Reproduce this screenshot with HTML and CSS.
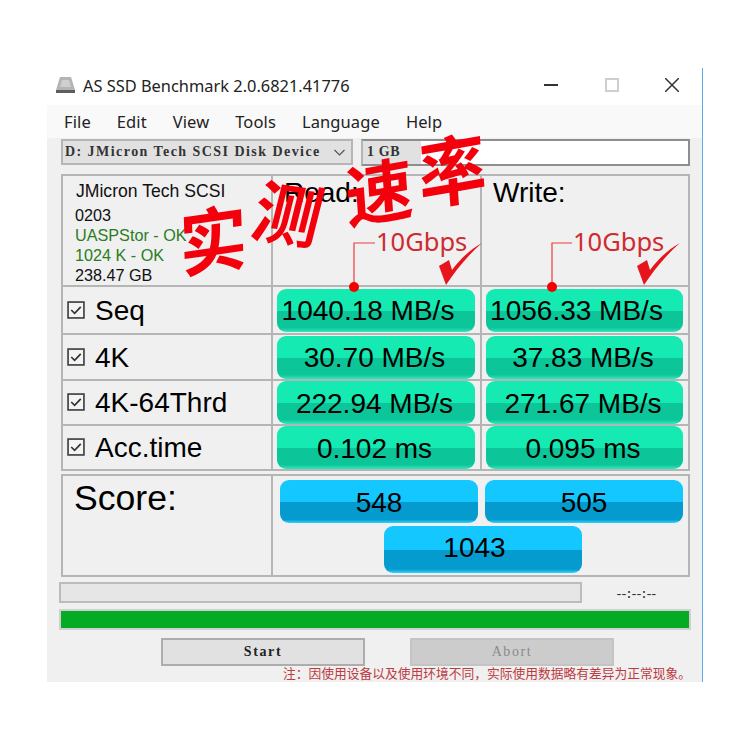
FILE: index.html
```html
<!DOCTYPE html>
<html lang="en">
<head>
<meta charset="utf-8">
<title>AS SSD Benchmark</title>
<link rel="stylesheet" href="styles.css">
</head>
<body>
<main class="window">
  <header class="titlebar">
    <svg class="app-icon" viewBox="0 0 21 18"><path d="M5 1h11l4 13H1z" fill="#b4b4b4"/><path d="M1 14h19v3H1z" fill="#5e5e5e"/><path d="M7 4h7l2 7H5z" fill="#cfcfcf"/></svg>
    <span class="title">AS SSD Benchmark 2.0.6821.41776</span>
    <div class="controls">
      <svg class="ctl" viewBox="0 0 14 14"><path d="M0 7h14" stroke="#333" stroke-width="2" fill="none"/></svg>
      <svg class="ctl" viewBox="0 0 14 14"><rect x="1" y="1" width="12" height="12" stroke="#cfcfcf" stroke-width="2" fill="none"/></svg>
      <svg class="ctl" viewBox="0 0 14 14"><path d="M0 0l14 14M14 0L0 14" stroke="#333" stroke-width="1.5" fill="none"/></svg>
    </div>
  </header>
  <nav class="menu">
    <span>File</span><span>Edit</span><span>View</span><span>Tools</span><span>Language</span><span>Help</span>
  </nav>
  <div class="content">
    <div class="device-row">
      <div class="combo">
        <span>D: JMicron Tech SCSI Disk Device</span>
        <svg class="chev" viewBox="0 0 12 7"><path d="M1 1l5 5 5-5" stroke="#555" stroke-width="1.2" fill="none"/></svg>
      </div>
      <div class="size-wrap">
        <span class="size">1 GB</span>
        <div class="field"></div>
      </div>
    </div>

    <section class="grid">
      <div class="cell info">
        <div class="info-name">JMicron Tech SCSI</div>
        <div>0203</div>
        <div class="ok">UASPStor - OK</div>
        <div class="ok">1024 K - OK</div>
        <div>238.47 GB</div>
      </div>
      <div class="cell head">Read:</div>
      <div class="cell head">Write:</div>

      <label class="cell row-label"><svg class="check" viewBox="0 0 17 17"><rect x="1" y="1" width="15" height="15" fill="#f4f4f4" stroke="#444" stroke-width="1.6"/><path d="M4 8.5l3.200 3.200L13 5.500" stroke="#333" stroke-width="1.600" fill="none"/></svg>Seq</label>
      <div class="cell"><div class="pill green seq">1040.18 MB/s</div></div>
      <div class="cell"><div class="pill green seq">1056.33 MB/s</div></div>

      <label class="cell row-label"><svg class="check" viewBox="0 0 17 17"><rect x="1" y="1" width="15" height="15" fill="#f4f4f4" stroke="#444" stroke-width="1.6"/><path d="M4 8.5l3.200 3.200L13 5.500" stroke="#333" stroke-width="1.600" fill="none"/></svg>4K</label>
      <div class="cell"><div class="pill green">30.70 MB/s</div></div>
      <div class="cell"><div class="pill green">37.83 MB/s</div></div>

      <label class="cell row-label"><svg class="check" viewBox="0 0 17 17"><rect x="1" y="1" width="15" height="15" fill="#f4f4f4" stroke="#444" stroke-width="1.6"/><path d="M4 8.5l3.200 3.200L13 5.500" stroke="#333" stroke-width="1.600" fill="none"/></svg>4K-64Thrd</label>
      <div class="cell"><div class="pill green">222.94 MB/s</div></div>
      <div class="cell"><div class="pill green">271.67 MB/s</div></div>

      <label class="cell row-label"><svg class="check" viewBox="0 0 17 17"><rect x="1" y="1" width="15" height="15" fill="#f4f4f4" stroke="#444" stroke-width="1.6"/><path d="M4 8.5l3.200 3.200L13 5.500" stroke="#333" stroke-width="1.600" fill="none"/></svg>Acc.time</label>
      <div class="cell"><div class="pill green">0.102 ms</div></div>
      <div class="cell"><div class="pill green">0.095 ms</div></div>
    </section>

    <section class="score">
      <div class="score-label">Score:</div>
      <div class="score-values">
        <div class="pill blue">548</div>
        <div class="pill blue">505</div>
        <div class="pill blue total">1043</div>
      </div>
    </section>

    <div class="progress-row">
      <div class="progress"></div>
      <span class="time">--:--:--</span>
    </div>
    <div class="bar"></div>
    <div class="actions">
      <button class="btn">Start</button>
      <button class="btn disabled">Abort</button>
    </div>
  </div>

  <p class="note">注：因使用设备以及使用环境不同，实际使用数据略有差异为正常现象。</p>

  <svg class="marks" viewBox="47 68 655 614">
    <path d="M375 243h-21v44M572 243h-20v44" fill="none" stroke="#ee3b3b" stroke-width="1.200"/>
    <circle cx="354" cy="287" r="5" fill="#f40000"/>
    <circle cx="552" cy="287" r="5" fill="#f40000"/>
    <path d="M439 266l10-6 3 10C461 258 471 249 482 243 468 255 456 270 446 285z" fill="#e8141c"/>
    <path d="M637 266l10-6 3 10C659 258 669 249 680 243 666 255 654 270 644 285z" fill="#e8141c"/>
  </svg>
  <span class="speed speed-read">10Gbps</span>
  <span class="speed speed-write">10Gbps</span>
  <span class="stamp s1">实</span>
  <span class="stamp s2">测</span>
  <span class="stamp s3">速</span>
  <span class="stamp s4">率</span>
</main>
</body>
</html>
```

FILE: styles.css
```css
* { box-sizing: border-box; }
html, body { margin: 0; background: #fff; }
body { padding: 68px 0 0 47px; width: 750px; height: 750px; overflow: hidden; font-family: "Liberation Sans", Arial, sans-serif; color: #000; }

.window { position: relative; width: 656px; height: 614px; background: #f0f0f0; border-right: 1px solid #5aa9ec; }

.titlebar { height: 37px; background: #fff; display: flex; align-items: center; padding-left: 8px; }
.app-icon { width: 21px; height: 18px; margin-right: 7px; margin-top: -3px; }
.title { font-family: "Noto Sans", sans-serif; font-size: 16.4px; color: #222; margin-top: -3px; }
.controls { margin-left: auto; display: flex; gap: 46.5px; padding-right: 23px; }
.ctl { width: 14px; height: 14px; margin-top: -3px; }

.menu { height: 33px; background: #f9f9f9; display: flex; gap: 26px; padding-left: 17px; align-items: center; font-family: "Noto Sans", sans-serif; font-size: 16.5px; letter-spacing: 0.1px; color: #222; }

.content { padding: 1px 12px 0 14px; position: relative; }

.device-row { display: flex; gap: 8px; height: 27px; }
.combo { width: 292px; height: 26px; background: #e1e1e1; border: 2px solid #b5b5b5; display: flex; align-items: center; justify-content: space-between; padding: 0 5px 0 2px; font-family: "Liberation Serif", serif; font-weight: 700; font-size: 14px; letter-spacing: 1.45px; color: #333; }
.chev { width: 13px; height: 7px; }
.size-wrap { flex: 1; display: flex; }
.size { width: 60px; background: #e1e1e1; border: 2px solid #8e8e8e; border-right: 0; border-left-color: #b5b5b5; padding: 3px 0 0 4px; font-family: "Liberation Serif", serif; font-weight: 700; font-size: 14px; letter-spacing: 0.6px; color: #333; }
.field { flex: 1; background: #fff; border: 2px solid #8e8e8e; border-left: 0; }

.grid { margin-top: 8px; width: 629px; display: grid; grid-template-columns: 208px 207px 206px; grid-template-rows: 109px 46px 44px 43px 43px; gap: 2px; border: 2px solid #b5b5b5; background: #b5b5b5; }
.cell { background: #f0f0f0; display: flex; align-items: center; }
.info { display: block; padding: 5px 0 0 12px; font-size: 16.2px; line-height: 20px; color: #111; }
.info-name { font-size: 17.6px; margin: 0 0 4px 1px; }
.ok { color: #2a7d1e; }
.head { align-items: flex-start; padding: 1px 0 0 11px; font-size: 28px; line-height: 32px; }
.row-label { font-size: 28px; padding: 1px 0 0 4px; }
.check { width: 18px; height: 18px; margin: -2px 10px 0 0; }

.pill { flex: 1; border-radius: 9px; display: flex; align-items: center; justify-content: center; font-size: 28px; }
.cell .pill { margin: 0 5px 0 4px; height: 43px; padding: 2px 3px 0 0; }
.cell .seq { padding-right: 16px; }
.green { background: linear-gradient(#15eab2 0, #15eab2 52%, #0cc598 52%, #0cc598 90%, #2fe8bd 100%); }
.blue { background: linear-gradient(#14c8ff 0, #14c8ff 52%, #059bcf 52%, #059bcf 92%, #2fd3ff 100%); }

.score { margin-top: 3px; width: 629px; height: 103px; display: grid; grid-template-columns: 208px 1fr; gap: 2px; border: 2px solid #b5b5b5; background: #b5b5b5; }
.score-label { background: #f0f0f0; font-size: 35.6px; line-height: 44px; padding-left: 11px; }
.score-values { background: #f0f0f0; display: grid; grid-template-columns: 198px 198px; grid-template-rows: 43px 47px; column-gap: 7px; row-gap: 3px; padding: 4px 0 0 7px; }
.score-values .pill { height: 100%; padding-top: 2px; }
.score-values .total { grid-column: 1 / 3; width: 198px; justify-self: center; margin-left: 2px; padding: 0 16px 3px 0; }

.progress-row { display: flex; align-items: center; margin-top: 5px; height: 21px; margin-left: -2px; }
.progress { width: 523px; height: 21px; background: #e6e6e6; border: 2px solid #bcbcbc; }
.time { margin: 3px 0 0 33px; font-family: "Liberation Mono", monospace; font-size: 13.3px; letter-spacing: -3px; color: #333; }

.bar { margin: 6px 0 0 -2px; width: 632px; height: 21px; background: #05ab24; border: 2px solid #d0d0d0; }

.actions { display: flex; gap: 45px; margin: 8px 0 0 100px; }
.btn { width: 204px; height: 28px; padding: 0; background: #e1e1e1; border: 2px solid #adadad; font-family: "Liberation Serif", serif; font-weight: 700; font-size: 14px; letter-spacing: 1.6px; color: #222; }
.btn.disabled { background: #cccccc; border-color: #c4c4c4; color: #8a8a8a; font-weight: 400; }

.note { position: absolute; right: 11px; top: 596px; margin: 0; font-family: "Noto Sans CJK SC", sans-serif; font-size: 12.75px; line-height: 18px; color: #bd3b3f; white-space: nowrap; }

.marks { position: absolute; left: 0; top: 0; width: 655px; height: 614px; pointer-events: none; }
.speed { position: absolute; top: 156px; font-family: "Noto Sans", sans-serif; font-size: 25.5px; line-height: 34px; color: #cf2a30; }
.speed-read { left: 329px; }
.speed-write { left: 526px; }

.stamp { position: absolute; font-family: "Noto Sans CJK SC", sans-serif; font-weight: 700; font-size: 68px; line-height: 68px; color: #f4000c; }
.s1 { left: 132px; top: 135px; transform: rotate(-8deg) skewX(-6deg) scaleY(1.05); }
.s2 { left: 208px; top: 109px; transform: rotate(8deg) skewX(-6deg); }
.s3 { left: 298px; top: 87px; transform: rotate(-10deg) skewX(-6deg); }
.s4 { left: 371px; top: 65px; transform: rotate(-10deg) skewX(-6deg) scaleY(1.1); }
```
